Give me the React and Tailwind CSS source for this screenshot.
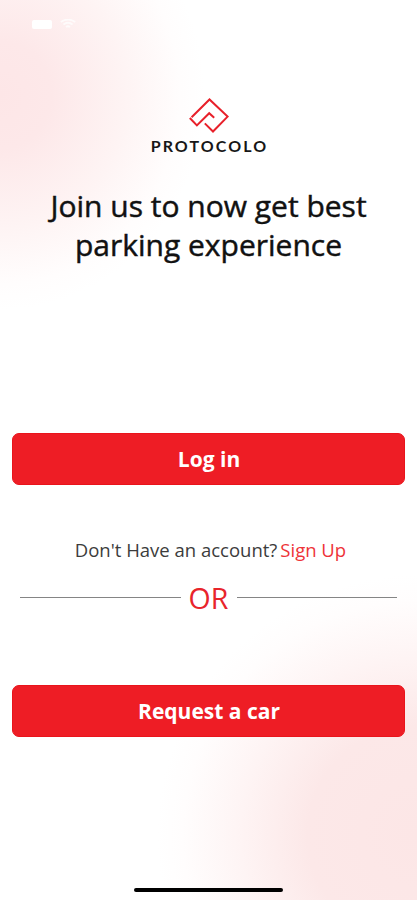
const Logo = () => (
  <div className="flex flex-col items-center">
    <svg width="40" height="36" viewBox="0 0 40 36" fill="none" stroke="#e8202a" strokeWidth="2">
      <path d="M2.6 20.2 L20.5 2.5 L38.6 19.6 L24 34.5 L15.8 26.4" />
      <path d="M0.8 21 L7.9 28.4 L20.2 16.2 L25.2 20.8" />
    </svg>
    <span className="mt-1 pl-[2px] font-['Lato'] text-[16px] leading-[18px] font-bold tracking-[2.1px] text-[#171717]">
      PROTOCOLO
    </span>
  </div>
);

const StatusBar = () => (
  <div className="flex h-12 items-center gap-2 pl-8">
    <div className="h-[9px] w-5 rounded-[2px] bg-white" />
    <svg width="16" height="10" viewBox="0 0 16 10" fill="none" stroke="#fff" strokeWidth="1.8" opacity="0.75">
      <path d="M0.8 3 Q8 -2 15.2 3" />
      <path d="M3.4 5.5 Q8 2 12.6 5.5" />
      <path d="M6 8 Q8 6.4 10 8" />
    </svg>
  </div>
);

const Button = ({ children }) => (
  <button
    type="button"
    className="flex h-[52px] w-full items-center justify-center rounded-[7px] border border-[#e9141b] bg-[#ee1d25] pt-[2px] pl-px text-[21px] font-bold text-white"
  >
    {children}
  </button>
);

const App = () => {
  return (
    <div className="flex h-[900px] w-[417px] flex-col overflow-hidden bg-white bg-[radial-gradient(ellipse_205px_215px_at_0px_95px,#fde6e7_0%,#fde8e9_25%,#fef4f4_62%,#fffdfd_88%,#ffffff_100%),radial-gradient(ellipse_260px_260px_at_417px_835px,#fce6e6_0%,#fce8e8_42%,#fef4f4_68%,#fffdfd_90%,#ffffff_100%)] bg-blend-multiply font-['Open_Sans',sans-serif]">
      <StatusBar />

      <header className="flex flex-col items-center pt-[49px]">
        <Logo />
        <h1 className="mt-[31px] text-center text-[30px] leading-[39px] font-medium text-[#111111] [-webkit-text-stroke:0.45px_#111111]">
          Join us to now get best
          <br />
          parking experience
        </h1>
      </header>

      <main className="mt-auto flex flex-col px-3">
        <Button>Log in</Button>

        <p className="mt-[51px] pl-1 text-center text-[18.5px] leading-7 text-[#3c3c3c]">
          Don't Have an account?
          <a href="#signup" className="ml-[3px] text-[#ee3338]">Sign Up</a>
        </p>

        <div className="mt-[14px] flex h-10 items-center px-2">
          <div className="mb-px h-px flex-1 bg-[#858585]" />
          <span className="w-14 text-center text-[28.5px] leading-10 text-[#e8242b]">OR</span>
          <div className="mb-px h-px flex-1 bg-[#858585]" />
        </div>

        <div className="mt-[67px]">
          <Button>Request a car</Button>
        </div>
      </main>

      <footer className="flex h-[163px] items-end justify-center pb-2">
        <div className="h-1 w-[149px] rounded-full bg-black" />
      </footer>
    </div>
  );
};

export default App;
